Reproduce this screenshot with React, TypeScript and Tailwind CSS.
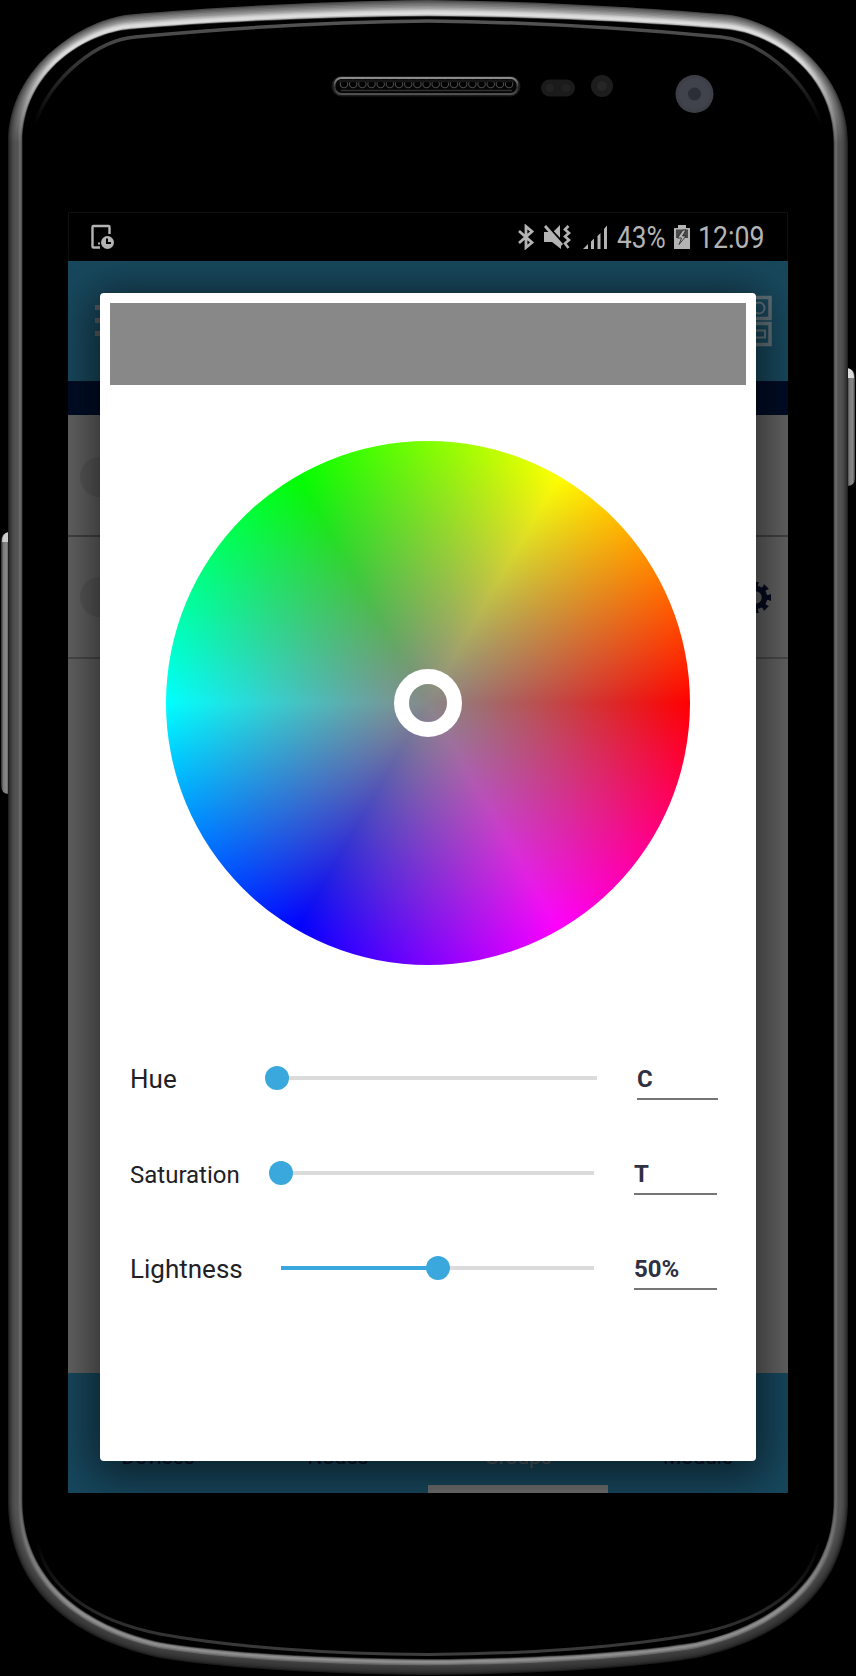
import React from "react";

const OUTER = [428, 0, 320, 1, 205, 8, 130, 14.5, 86, 18.5, 8, 64, 8, 143, 8, 1500, 8, 1608, 100, 1645, 160, 1658, 220, 1668, 330, 1674.5, 428, 1675];
const INNER = [428, 16.5, 320, 17, 205, 23, 130, 29.5, 88, 33, 22.5, 70, 22.5, 143, 22.5, 1500, 22.5, 1590, 100, 1629, 160, 1642, 225, 1653, 330, 1658.5, 428, 1659];

function half(p: number[]) {
  const q = (i: number) => `${p[i]},${p[i + 1]}`;
  return `M${q(0)}C${q(2)} ${q(4)} ${q(6)}C${q(8)} ${q(10)} ${q(12)}L${q(14)}C${q(16)} ${q(18)} ${q(20)}C${q(22)} ${q(24)} ${q(26)}`;
}

function outline(t: number) {
  const p = OUTER.map((v, i) => v + (INNER[i] - v) * t);
  const m = p.map((v, i) => (i % 2 ? v : 856 - v));
  return `${half(p)}Z ${half(m)}Z`;
}

// depth, top, side, bottom colours of each ring of the metal rim
const RINGS: [number, string, string, string][] = [
  [0, "#484848", "#202020", "#1c1c1c"],
  [0.08, "#5c5c5c", "#303030", "#282828"],
  [0.16, "#6c6c6c", "#3c3c3c", "#303030"],
  [0.26, "#7e7e7e", "#464646", "#363636"],
  [0.36, "#909090", "#4e4e4e", "#3a3a3a"],
  [0.46, "#a4a4a4", "#525252", "#3e3e3e"],
  [0.54, "#b6b6b6", "#545454", "#444444"],
  [0.61, "#cacaca", "#505050", "#6a6a6a"],
  [0.68, "#d8d8d8", "#5c5c5c", "#808080"],
  [0.76, "#dedede", "#686868", "#909090"],
  [0.88, "#bcbcbc", "#5e5e5e", "#747474"],
  [0.95, "#505050", "#323232", "#303030"],
  [1, "#000000", "#000000", "#000000"],
];

const GLINT_L = "M428,21C330,22 220,29 135,37C100,40 52,74 35,124";
const GLINT_B = "M36,1535C44,1590 95,1621 160,1634C230,1647 330,1654 428,1654.500";

function PhoneBody() {
  return (
    <svg className="absolute inset-0" width="856" height="1676" viewBox="0 0 856 1676">
      <defs>
        {RINGS.map(([t, a, b, c], i) => (
          <linearGradient key={t} id={`ring${i}`} x1="0" y1="0" x2="0" y2="1676" gradientUnits="userSpaceOnUse">
            <stop offset="0" stopColor={a} />
            <stop offset="0.035" stopColor={a} />
            <stop offset="0.085" stopColor={b} />
            <stop offset="0.9" stopColor={b} />
            <stop offset="0.96" stopColor={c} />
          </linearGradient>
        ))}
        <linearGradient id="glintTop" x1="0" y1="20" x2="0" y2="125" gradientUnits="userSpaceOnUse">
          <stop offset="0" stopColor="#555" />
          <stop offset="0.3" stopColor="#404040" />
          <stop offset="0.7" stopColor="#1a1a1a" />
          <stop offset="1" stopColor="#000" />
        </linearGradient>
        <linearGradient id="glintBottom" x1="0" y1="1540" x2="0" y2="1655" gradientUnits="userSpaceOnUse">
          <stop offset="0" stopColor="#000" />
          <stop offset="0.7" stopColor="#2c2c2c" />
          <stop offset="1" stopColor="#3e3e3e" />
        </linearGradient>
        <linearGradient id="key" x1="0" x2="1">
          <stop offset="0" stopColor="#2a2a2a" />
          <stop offset="0.3" stopColor="#7a7a7a" />
          <stop offset="0.7" stopColor="#888" />
          <stop offset="1" stopColor="#444" />
        </linearGradient>
        <linearGradient id="speaker" x1="0" x2="0" y1="0" y2="1">
          <stop offset="0" stopColor="#8c8c8c" />
          <stop offset="0.6" stopColor="#333" />
          <stop offset="1" stopColor="#505050" />
        </linearGradient>
      </defs>
      <path d="M9,532Q1,533 1,542V785Q1,794 9,794Z" fill="url(#key)" />
      <path d="M9,532Q2,533 2,542H9Z" fill="#ccc" />
      <path d="M847,368Q855,369 855,378V478Q855,486 847,486Z" fill="url(#key)" />
      <path d="M847,368Q854,369 854,378H847Z" fill="#ddd" />
      {RINGS.map(([t], i) => (
        <path key={t} d={outline(t)} fill={`url(#ring${i})`} />
      ))}
      {[undefined, "translate(856,0) scale(-1,1)"].map((tr, i) => (
        <g key={i} transform={tr} fill="none">
          <path d={GLINT_L} stroke="url(#glintTop)" strokeWidth="3.500" />
          <path d={GLINT_B} stroke="url(#glintBottom)" strokeWidth="3" />
        </g>
      ))}
      <rect x="332.500" y="77" width="187" height="18.500" rx="9" fill="#0a0a0a" stroke="#1b1b1b" strokeWidth="2" />
      <rect x="334.500" y="78" width="183" height="16" rx="7" fill="#050505" stroke="url(#speaker)" strokeWidth="2" />
      <path d="M341,90.500H512" stroke="#303030" strokeWidth="1.500" />
      {Array.from({ length: 19 }, (_, i) => (
        <circle key={i} cx={344 + i * 9.17} cy="84" r="3.700" fill="#000" stroke="#4c4c4c" strokeWidth="1.100" />
      ))}
      <path d="M339,81H514" stroke="#161616" strokeWidth="2.500" />
      <rect x="541" y="79.500" width="34" height="17" rx="8.500" fill="#1b1b1b" />
      <circle cx="550" cy="88" r="4" fill="#222" />
      <circle cx="566" cy="88" r="4" fill="#222" />
      <circle cx="602" cy="86" r="11" fill="#1d1d1d" />
      <circle cx="602" cy="86" r="5" fill="#262626" />
      <circle cx="694.500" cy="94" r="19" fill="#3c3f46" />
      <circle cx="694.500" cy="94" r="16" fill="#40434b" />
      <circle cx="694.500" cy="94" r="6.500" fill="#2b2e36" />
    </svg>
  );
}

function StatusBar() {
  return (
    <div className="flex h-[49px] items-start border border-b-0 border-[#101010] bg-black pt-[11px] text-[#b4b4b4]">
      <svg className="ml-[21px]" width="26" height="26" viewBox="0 0 26 26" fill="none">
        <path d="M19.500 10V3Q19.500 2 18.500 2H3.500Q2.500 2 2.500 3V22.500Q2.500 23.500 3.500 23.500H10" stroke="currentColor" strokeWidth="2.400" />
        <path d="M8 19.500h2" stroke="currentColor" strokeWidth="2" />
        <circle cx="17.500" cy="18.500" r="6.500" fill="currentColor" />
        <path d="M17 14.500V19H21" stroke="#000" strokeWidth="2" />
      </svg>
      <svg className="ml-[401px]" width="18" height="26" viewBox="0 0 18 26" fill="none" stroke="currentColor" strokeWidth="2.800">
        <path d="M2 7L15 18.500L9 23.500V2.500L15 7.500L2 19" />
      </svg>
      <svg className="ml-[7px]" width="30" height="26" viewBox="0 0 30 26">
        <path d="M2 8H8L19 20V25L10 18H2ZM18 1V14L11.500 7.500Z" fill="currentColor" />
        <path d="M4 0L21 19" stroke="#000" strokeWidth="2" />
        <path d="M3 2L20 21" stroke="currentColor" strokeWidth="2.800" />
        <path d="M26.500 2L23 5.500L27 9L23 12.500L27 16L23 19.500L26.500 24" fill="none" stroke="currentColor" strokeWidth="2.600" />
      </svg>
      <svg className="ml-[10px]" width="27" height="26" viewBox="0 0 27 26" fill="currentColor">
        <path d="M1 25L6 20V25ZM9 17.500L12 14.500V25H9ZM15.500 12L18.500 9V25H15.500ZM22 5L25 1.500V25H22Z" />
      </svg>
      <div className="ml-[8px] h-[30px] w-[56px] shrink-0 text-[31px] leading-[28px]">
        <span className="inline-block origin-left scale-x-[0.845]">43%</span>
      </div>
      <svg className="shrink-0" width="18" height="26" viewBox="0 0 18 26">
        <path d="M5 1H13V4H17V25H1V4H5Z" fill="currentColor" />
        <path d="M3 5.500H15V14H3Z" fill="#4a4a4a" />
        <path d="M10 6L4.500 14H8.500L6 20.500L13 12H9.500L13 6Z" fill="#b4b4b4" stroke="#222" strokeWidth=".8" />
      </svg>
      <div className="ml-[7px] h-[30px] text-[31px] leading-[28px]">
        <span className="inline-block origin-left scale-x-[0.86]">12:09</span>
      </div>
    </div>
  );
}

function Gear() {
  return (
    <svg width="33" height="33" viewBox="-16.500 -16.500 33 33">
      <circle r="9" fill="none" stroke="#060b20" strokeWidth="5.500" />
      {[0, 45, 90, 135, 180, 225, 270, 315].map((a) => (
        <path key={a} transform={`rotate(${a})`} d="M10,-2.500H13L15.500,-3.500V3.500L13,2.500H10Z" fill="#060b20" />
      ))}
    </svg>
  );
}

function AppBehind() {
  return (
    <>
      <div className="flex h-[120px] justify-between bg-[#18485d]">
        <div className="ml-[27px] mt-[44px] flex w-9 flex-col gap-2">
          <div className="h-[5px] bg-[#5a5f63]" />
          <div className="h-[5px] bg-[#5a5f63]" />
          <div className="h-[5px] bg-[#5a5f63]" />
        </div>
        <svg className="mr-4 mt-[34px]" width="50" height="52" viewBox="0 0 50 52" fill="none" stroke="#64747b" strokeWidth="3.500">
          <rect x="26" y="2.500" width="22" height="21" />
          <rect x="26" y="28.500" width="22" height="21" />
          <rect x="2" y="2.500" width="20" height="47" />
          <circle cx="37" cy="13" r="5.500" strokeWidth="2" />
          <path d="M31 42.500V35.500H43V42.500Z" strokeWidth="2" />
        </svg>
      </div>
      <div className="h-[34px] bg-[#000d26]" />
      <div className="flex-1 bg-[#636263]">
        <div className="flex h-[122px] items-center border-b-2 border-[#424242] pl-3 pt-[3px]">
          <div className="h-10 w-10 rounded-full bg-[#585858]" />
        </div>
        <div className="flex h-[122px] items-center justify-between border-b-2 border-[#4a4a4a] pl-3 pr-4">
          <div className="h-10 w-10 rounded-full bg-[#585858]" />
          <Gear />
        </div>
      </div>
      <div className="grid h-[120px] grid-cols-4 bg-[#17475d] text-center text-[21px] leading-6 text-[#061126]">
        <div className="pt-[72px]">Devices</div>
        <div className="pt-[72px]">Nodes</div>
        <div className="flex flex-col justify-between pt-[72px] text-[#5a6064]">
          Groups
          <div className="h-2 bg-[#6e6e6e]" />
        </div>
        <div className="pt-[72px]">Module</div>
      </div>
    </>
  );
}

function ColorWheel() {
  return (
    <div className="mx-auto mt-[56px] flex h-[524px] w-[524px] items-center justify-center rounded-full bg-[radial-gradient(circle_closest-side,#888888_0%,#88888800_100%),conic-gradient(from_90deg,#f00,#f0f,#00f,#0ff,#0f0,#ff0,#f00)]">
      <div className="h-[68px] w-[68px] rounded-full border-[15px] border-white" />
    </div>
  );
}

function Slider({ left, width, value }: { left: string; width: string; value: number }) {
  return (
    <div className={`flex h-6 items-center ${left} ${width}`}>
      <div className="h-1 bg-[#3aa8dc]" style={{ width: `${value}%` }} />
      <div className="z-10 -mx-3 h-6 w-6 shrink-0 rounded-full bg-[#3aa8dc]" />
      <div className="h-1 flex-1 bg-[#dbdbdb]" />
    </div>
  );
}

function Row({ label, labelClass, left, width, value, text, field }: { label: string; labelClass: string; left: string; width: string; value: number; text: string; field: string }) {
  return (
    <div className="flex h-[95px] items-start">
      <div className={`w-[120px] shrink-0 whitespace-nowrap leading-[26px] text-[#212125] ${labelClass}`}>{label}</div>
      <Slider left={left} width={width} value={value} />
      <div className={`h-[34px] border-b-2 border-[#757577] text-[24px] font-bold leading-[26px] text-[#2f3042] ${field}`}>{text}</div>
    </div>
  );
}

function Dialog() {
  return (
    <div className="absolute left-8 top-[81px] flex h-[1168px] w-[656px] flex-col rounded bg-white p-[10px] shadow-[0_8px_44px_8px_rgba(0,0,0,0.55)]">
      <div className="h-[82px] bg-[#888889]" />
      <ColorWheel />
      <div className="mt-[101px] flex flex-col pl-5">
        <Row label="Hue" labelClass="text-[26px]" left="ml-[27px]" width="w-[320px]" value={0} text="C" field="ml-[40px] w-[81px]" />
        <Row label="Saturation" labelClass="text-[24px] pt-px" left="ml-[31px]" width="w-[313px]" value={0} text="T" field="ml-[40px] w-[83px]" />
        <Row label="Lightness" labelClass="text-[26px]" left="ml-[31px]" width="w-[313px]" value={50} text="50%" field="ml-[40px] w-[83px]" />
      </div>
    </div>
  );
}

export default function App() {
  return (
    <div className="relative h-[1676px] w-[856px] overflow-hidden bg-black pl-[68px] pt-[212px] font-['Roboto',sans-serif]">
      <PhoneBody />
      <div className="relative h-[1281px] w-[720px] overflow-hidden">
        <div className="flex h-full flex-col">
          <StatusBar />
          <AppBehind />
        </div>
        <Dialog />
      </div>
    </div>
  );
}
